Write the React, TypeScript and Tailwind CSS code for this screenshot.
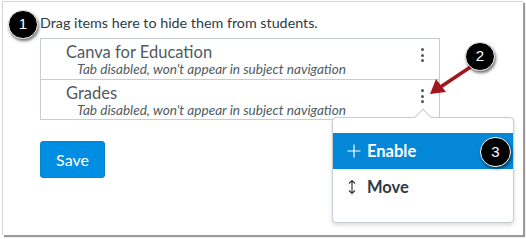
import React from 'react'

const font = { fontFamily: 'Lato, "Noto Sans", sans-serif' }

function Kebab() {
  return (
    <div className="flex flex-col items-center gap-[2.5px] w-[4px]">
      <span className="w-[3px] h-[3px] rounded-full bg-[#4a5862]" />
      <span className="w-[3px] h-[3px] rounded-full bg-[#4a5862]" />
      <span className="w-[3px] h-[3px] rounded-full bg-[#4a5862]" />
    </div>
  )
}

function Badge({ n, className }: { n: string; className: string }) {
  return (
    <div
      className={`absolute flex items-center justify-center rounded-full bg-black border border-white text-white text-[15px] shadow-[1px_2px_3px_rgba(0,0,0,0.55)] ${className}`}
      style={{ fontFamily: '"Liberation Sans", Arial, sans-serif' }}
    >
      {n}
    </div>
  )
}

function Row({ title, last }: { title: string; last?: boolean }) {
  return (
    <div className={`flex items-start justify-between pl-[25px] pr-[15px] pt-[4px] ${last ? 'h-[39px]' : 'h-[41px] border-b border-[#c7cdd1]'}`}>
      <div className="flex flex-col">
        <span className="text-[16.5px] leading-[19px] text-[#4f5b63]">{title}</span>
        <span className="text-[13.6px] leading-[15px] italic text-[#4f5b63] pl-[11px]">
          Tab disabled, won't appear in subject navigation
        </span>
      </div>
      <div className="pt-[5px]">
        <Kebab />
      </div>
    </div>
  )
}

export default function App() {
  return (
    <div className="relative w-[526px] h-[239px] bg-white overflow-hidden" style={font}>
      <div className="ml-[2px] mt-[1px] w-[521px] h-[234px] border-l border-t border-[#d4d4d4] shadow-[2px_2px_1px_rgba(0,0,0,0.4)] pl-[37px] pt-[11px]">
        <p className="text-[14.3px] leading-5 text-[#2d3b45]">Drag items here to hide them from students.</p>
        <div className="mt-[5px] w-[400px] border border-[#c7cdd1]">
          <Row title="Canva for Education" />
          <Row title="Grades" last />
        </div>
        <button className="mt-[21px] w-[65px] h-[37px] rounded-[3px] bg-[#008ee2] text-white text-[16px] border border-[#0683cf]">
          Save
        </button>
      </div>

      {/* red arrow */}
      <svg className="absolute left-0 top-0" width="526" height="239">
        <line x1="472" y1="66" x2="442" y2="86" stroke="#a3161d" strokeWidth="3.5" strokeLinecap="round" />
        <polygon points="430,94 436,79 446,92" fill="#a3161d" />
      </svg>

      {/* popover menu */}
      <div className="absolute left-[332px] top-[117px] w-[182px] h-[106px] bg-white border border-[#c7cdd1] rounded-[4px] shadow-[0_2px_4px_rgba(0,0,0,0.15)] pt-[15px]">
        <div className="absolute -top-[7px] left-[84px] w-[12px] h-[12px] bg-white border-l border-t border-[#c7cdd1] rotate-45" />
        <div className="relative flex items-center h-[36px] bg-[#0587d8] pl-[13px] text-white">
          <svg width="16" height="16" viewBox="0 0 16 16" className="mr-[5px]">
            <path d="M8 1.5v13M1.5 8h13" stroke="white" strokeWidth="1.2" fill="none" />
          </svg>
          <span className="text-[16.5px] font-bold">Enable</span>
        </div>
        <div className="flex items-center h-[36px] pl-[14px] text-[#2d3b45]">
          <svg width="10" height="16" viewBox="0 0 10 16" className="mr-[10px]">
            <path d="M5 1.5v13M2 4.5l3-3 3 3M2 11.5l3 3 3-3" stroke="#2d3b45" strokeWidth="1.2" fill="none" />
          </svg>
          <span className="text-[16.5px] font-bold">Move</span>
        </div>
      </div>

      <Badge n="1" className="left-[8px] top-[10px] w-[30px] h-[29px]" />
      <Badge n="2" className="left-[465px] top-[42px] w-[30px] h-[29px]" />
      <Badge n="3" className="left-[480px] top-[137px] w-[31px] h-[30px]" />
    </div>
  )
}
